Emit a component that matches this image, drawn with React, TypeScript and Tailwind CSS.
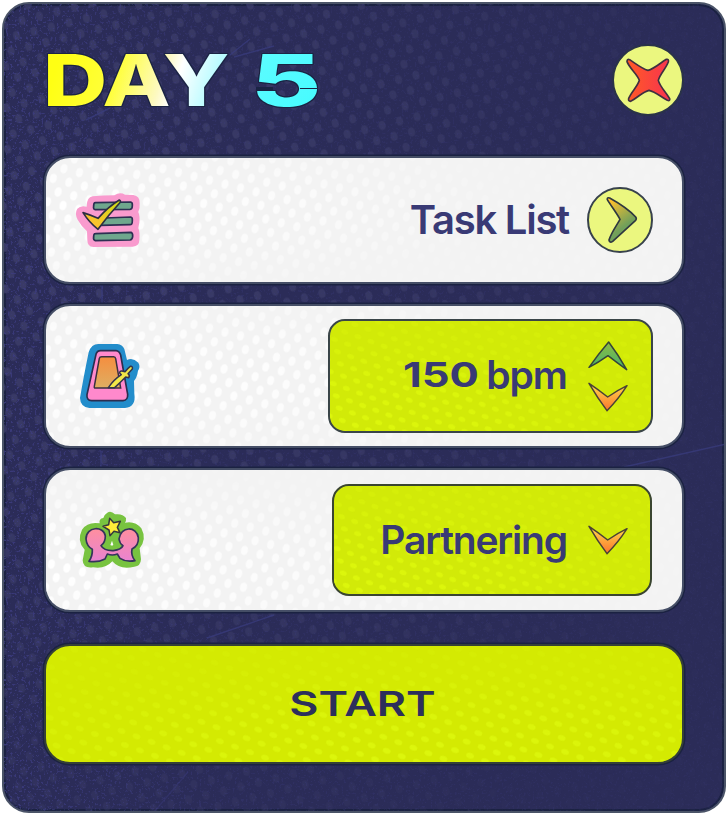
import { useId, type ReactNode } from "react";

type DotsProps = {
  color: string;
  step?: number;
  radius?: number;
  angle?: number;
  from: [number, number];
  spread?: number;
  base?: number;
  flat?: boolean;
};

function Dots({ color, step = 12, radius = 3, angle = 12, from, spread = 0.8, base = 0.1, flat = false }: DotsProps) {
  const id = useId();
  return (
    <svg className="pointer-events-none absolute inset-0 h-full w-full" aria-hidden="true">
      <defs>
        <pattern id={id + "p"} width={step} height={step * 1.5} patternUnits="userSpaceOnUse" patternTransform={`rotate(${angle})`}>
          <ellipse cx={step / 4} cy={step * 0.375} rx={flat ? radius : radius * 0.75} ry={flat ? radius * 0.7 : radius} fill={color} />
          <ellipse cx={step * 0.75} cy={step * 1.125} rx={flat ? radius : radius * 0.75} ry={flat ? radius * 0.7 : radius} fill={color} />
        </pattern>
        <radialGradient id={id + "g"} cx={from[0]} cy={from[1]} r={spread}>
          <stop offset="0" stopColor="#fff" />
          <stop offset="0.5" stopColor="#fff" stopOpacity={(1 + base) / 1.6} />
          <stop offset="1" stopColor="#fff" stopOpacity={base} />
        </radialGradient>
        <mask id={id + "m"}>
          <rect width="100%" height="100%" fill={`url(#${id}g)`} />
        </mask>
      </defs>
      <rect width="100%" height="100%" fill={`url(#${id}p)`} mask={`url(#${id}m)`} />
    </svg>
  );
}

function Speckle() {
  return (
    <svg className="pointer-events-none absolute inset-0 h-full w-full" aria-hidden="true">
      <defs>
        <filter id="speckle" x="0" y="0" width="100%" height="100%" colorInterpolationFilters="sRGB">
          <feTurbulence type="fractalNoise" baseFrequency="0.45" numOctaves="2" seed="4" />
          <feColorMatrix values="0 0 0 0 0.24  0 0 0 0 0.24  0 0 0 0 0.5  0 0 0 8 -4.6" />
        </filter>
        <linearGradient id="speckleFade">
          <stop offset="0" stopColor="#fff" stopOpacity="0.85" />
          <stop offset="0.3" stopColor="#fff" stopOpacity="0.3" />
          <stop offset="1" stopColor="#fff" stopOpacity="0.15" />
        </linearGradient>
        <mask id="speckleMask">
          <rect width="100%" height="100%" fill="url(#speckleFade)" />
        </mask>
      </defs>
      <g mask="url(#speckleMask)">
        <rect width="100%" height="100%" filter="url(#speckle)" />
      </g>
      <g fill="none" stroke="#3b3d80" strokeOpacity=".7" strokeWidth="1.4">
        <path d="M203 634 L270 611" />
        <path d="M620 463 L722 440" />
        <path d="M82 116 L106 104 M230 53 L270 42 M226 51 L246 35" />
        <path d="M98 280 V302 M97 448 V466" />
        <path d="M150 808 L184 768" strokeOpacity=".4" />
      </g>
    </svg>
  );
}

function CloseIcon() {
  return (
    <svg width="46" height="46" viewBox="104 110 138 138" aria-hidden="true">
      <defs>
        <linearGradient id="close">
          <stop offset="0" stopColor="#ff5a26" />
          <stop offset="1" stopColor="#f8334f" />
        </linearGradient>
      </defs>
      <path d="M118 118 C135 129 154 145 173 150 C193 145 210 127 228 117 Q236 115 234 125 C226 146 208 162 204 180 C209 200 228 216 238 235 Q240 243 231 240 C212 230 195 214 176 210 C157 214 141 233 121 243 Q113 243 115 234 C123 215 142 198 147 180 C141 161 118 145 110 124 Q110 115 118 118Z" fill="url(#close)" stroke="#3f3040" strokeWidth="5" strokeLinejoin="round" />
    </svg>
  );
}

function ListIcon() {
  return (
    <svg width="100" height="80" viewBox="0 0 300 240" aria-hidden="true">
      <defs>
        <linearGradient id="tick" x1="0" y1="1" x2="1" y2="0">
          <stop offset="0.2" stopColor="#ffc02f" />
          <stop offset="1" stopColor="#c9df13" />
        </linearGradient>
      </defs>
      <path d="M98 49 Q130 46 163 46 Q180 35 195 44 L220 45 Q240 48 239 70 Q240 86 235 96 Q240 108 238 128 Q236 137 235 145 Q240 155 238 180 Q238 198 218 200 L100 201 Q82 200 82 180 L81 154 Q65 140 53 119 Q43 100 52 86 Q62 75 80 80 Q80 51 98 49Z" fill="#f99bce" />
      <g fill="#6fa78d" stroke="#2d2f52" strokeWidth="5" strokeLinejoin="round">
        <path d="M106 68 Q155 67 212 66 Q218 67 217 77 Q217 87 210 88 L106 89 Q99 88 101 78 Q101 68 106 68Z" />
        <path d="M135 114 L212 111 Q218 112 217 122 Q217 134 210 134 L120 136 Z" />
        <path d="M106 161 L213 157 Q219 160 218 170 Q217 179 210 180 L106 182 Q99 180 101 170 Q101 161 106 161Z" />
      </g>
      <path d="M69 98 Q92 105 114 115 Q145 80 178 60 Q184 62 179 69 Q145 105 114 148 Q88 128 69 98Z" fill="url(#tick)" stroke="#2d2f42" strokeWidth="5" strokeLinejoin="round" />
    </svg>
  );
}

function MetronomeIcon() {
  return (
    <svg className="mb-[2px]" width="100" height="90" viewBox="0 0 300 270" aria-hidden="true">
      <defs>
        <linearGradient id="face" x1="0" y1="0" x2="0" y2="1">
          <stop offset="0" stopColor="#f58e3f" />
          <stop offset="1" stopColor="#dfae62" />
        </linearGradient>
      </defs>
      <path d="M115 42 H172 Q187 43 193 57 L201 90 Q219 82 235 98 Q242 110 234 122 L232 133 Q230 143 222 153 L223 191 Q229 230 195 234 H88 Q61 231 60 204 Q70 145 86 67 Q94 42 115 42Z" fill="#238dcb" />
      <path d="M122 62 H168 Q178 63 182 75 L203 193 Q204 211 189 212 H95 Q79 211 81 194 L108 73 Q111 62 122 62Z" fill="#ff89cc" stroke="#2c2d4f" strokeWidth="5" />
      <path d="M125 80 H161 Q166 80 167 86 L182 174 H104 Q102 173 103 169 L118 85 Q119 80 125 80Z" fill="url(#face)" stroke="#3a3040" strokeWidth="4.5" />
      <path d="M145 173 Q160 150 184 134 L179 129 Q179 122 186 123 L195 125 Q202 116 211 109 Q219 108 217 117 L204 131 Q211 137 206 143 L197 141 Q180 158 164 173Z" fill="#f2e748" stroke="#34344b" strokeWidth="4.5" strokeLinejoin="round" />
    </svg>
  );
}

function PartnersIcon() {
  return (
    <svg width="100" height="80" viewBox="0 0 300 240" aria-hidden="true">
      <defs>
        <linearGradient id="people" x1="0" y1="0" x2="0" y2="1">
          <stop offset="0" stopColor="#ff8f9e" />
          <stop offset="1" stopColor="#e883d2" />
        </linearGradient>
      </defs>
      <path fillRule="evenodd" d="M142 38 Q153 31 165 43 Q188 40 198 54 Q199 63 195 68 Q226 62 244 85 Q261 117 239 145 L243 178 Q242 199 223 200 Q180 211 157 184 Q136 208 99 202 Q69 206 68 181 L74 149 Q49 123 66 89 Q83 64 119 70 Q116 56 130 54 Q133 43 142 38Z M156 122 L151 135 Q156 138 160 135Z" fill="#78c340" />
      <path d="M136 108 C132 77 78 78 78 117 Q80 139 97 148 Q98 169 87 184 Q115 188 135 177 L142 162 Q157 168 172 162 L180 175 Q198 187 225 182 Q212 166 216 147 Q237 137 235 113 C231 78 181 77 177 117 Q179 131 189 137 Q184 149 160 152 Q132 153 123 137 Q136 128 136 108Z" fill="url(#people)" stroke="#34345b" strokeWidth="5" strokeLinejoin="round" />
      <path d="M149 55 L161 68 L181 64 L172 82 L180 98 L162 94 L150 107 L147 90 L129 79 L146 74Z" fill="#ffed39" stroke="#36363c" strokeWidth="4.5" strokeLinejoin="round" />
    </svg>
  );
}

function ChevronRight() {
  return (
    <svg width="32" height="48" viewBox="650 78 96 144" aria-hidden="true">
      <defs>
        <linearGradient id="next" x1="0" y1="0" x2="0.5" y2="1">
          <stop offset="0.1" stopColor="#ffc02c" />
          <stop offset="0.75" stopColor="#71a05a" />
        </linearGradient>
      </defs>
      <path d="M661 84 C688 99 721 121 739 141 Q743 147 738 152 L670 214 Q661 220 659 210 C666 188 681 168 692 148 C681 128 666 109 654 89 Q653 81 661 84Z" fill="url(#next)" stroke="#2f3840" strokeWidth="5" strokeLinejoin="round" />
    </svg>
  );
}

function ChevronUp() {
  return (
    <svg width="40" height="30" viewBox="834 122 120 90" aria-hidden="true">
      <defs>
        <linearGradient id="up" x1="0" y1="0" x2="0" y2="1">
          <stop offset="0" stopColor="#8fbb42" />
          <stop offset="1" stopColor="#43b36d" />
        </linearGradient>
      </defs>
      <path d="M896 125 Q924 162 950 208 Q922 188 894 166 Q866 186 837 201 Q866 160 896 125Z" fill="url(#up)" stroke="#35443c" strokeWidth="4.5" strokeLinejoin="round" />
    </svg>
  );
}

function ChevronDown({ id }: { id: string }) {
  return (
    <svg width="40" height="30" viewBox="834 244 120 90" aria-hidden="true">
      <defs>
        <linearGradient id={id} x1="0" y1="0" x2="0" y2="1">
          <stop offset="0.1" stopColor="#ffd34a" />
          <stop offset="0.9" stopColor="#fb7d31" />
        </linearGradient>
      </defs>
      <path d="M837 248 Q864 266 893 289 Q924 268 951 255 Q925 296 891 330 Q862 291 837 248Z" fill={`url(#${id})`} stroke="#4a4236" strokeWidth="4.5" strokeLinejoin="round" />
    </svg>
  );
}

function Card({ className, children, dots }: { className: string; children: ReactNode; dots: [number, number] }) {
  return (
    <section className={`relative overflow-hidden rounded-[26px] border-2 border-[#454e66] bg-[#f3f3f3] shadow-[0_0_0_1.5px_#1b2242] ${className}`}>
      <Dots color="#ffffff" from={dots} step={16} radius={4.8} angle={14} spread={0.75} />
      <div className="relative flex h-full items-center justify-between pl-[14px] pr-[29px]">{children}</div>
    </section>
  );
}

export default function App() {
  return (
    <div className="h-[814px] w-[726px] overflow-hidden bg-white pl-[2px] pt-[2px] font-['Inter',sans-serif] text-[#393a75]">
      <main className="relative flex h-[811px] w-[724px] flex-col overflow-hidden rounded-[27px] border-2 border-[#4b5468] bg-[#2b2c58] px-[40px] pt-[39px] shadow-[inset_0_0_0_2px_#1b2242]">
        <Dots color="#3b3c68" from={[0.1, 0.3]} step={18} radius={4.6} angle={-14} spread={0.9} base={0.12} />
        <Speckle />
        <header className="relative flex h-[74px] items-center justify-between">
          <h1 className="-ml-px flex h-[74px] w-[280px] text-[72px] font-extrabold leading-[74px] [filter:drop-shadow(1px_0_0_#1b2444)_drop-shadow(-1px_0_0_#1b2444)_drop-shadow(0_1px_0_#1b2444)_drop-shadow(0_-1px_0_#1b2444)]">
            <span className="w-[208px]">
              <span className="inline-block origin-left scale-x-[1.235] bg-[linear-gradient(105deg,#ffff14_10%,#ffff3c_40%,#fdf9c0_62%,#ffffff_70%,#b8fbff_88%)] bg-clip-text tracking-[-0.01em] text-transparent">DAY</span>
            </span>
            <span className="relative">
              <span className="inline-block origin-left scale-x-[1.5] bg-linear-to-br from-[#5ffcff] to-[#42fbff] bg-clip-text text-transparent">5</span>
              <i className="absolute left-[6px] top-[45px] h-px w-[15px] bg-[#1b2444]" />
              <i className="absolute left-[49px] top-[45px] h-px w-[17px] bg-[#1b2444]" />
            </span>
          </h1>
          <button className="flex size-[72px] items-center justify-center rounded-full border-2 border-[#2a3348] bg-[#ebf77f]" aria-label="Close">
            <CloseIcon />
          </button>
        </header>

        <div className="relative mt-[39px] flex flex-col">
          <Card className="h-[128px]" dots={[0, 0.4]}>
            <ListIcon />
            <div className="flex items-center gap-[18px]">
              <span className="text-[40px] font-semibold leading-none tracking-[-0.031em]">Task List</span>
              <button className="flex size-[66px] items-center justify-center rounded-full border-2 border-[#38424c] bg-[#ebf77f] pl-1" aria-label="Open task list">
                <ChevronRight />
              </button>
            </div>
          </Card>

          <Card className="mt-[20px] h-[144px]" dots={[0.1, 0.5]}>
            <MetronomeIcon />
            <div className="relative flex h-[114px] w-[325px] items-center justify-end overflow-hidden rounded-[17px] border-2 border-[#3a4548] bg-[#d2ea08] pr-[23px]">
              <Dots color="#dcf60c" from={[0.1, 0.9]} step={14} radius={3.6} angle={20} base={0.4} flat />
              <span className="relative flex w-[164px] items-baseline pb-[4px]">
                <span className="w-[84px] text-[34px] font-bold leading-none">
                  <span className="inline-block origin-left -translate-y-[2px] scale-x-[1.28]">150</span>
                </span>
                <span className="text-[39px] font-semibold leading-none tracking-[-0.025em]">bpm</span>
              </span>
              <span className="relative ml-[21px] flex flex-col gap-[11px]">
                <ChevronUp />
                <ChevronDown id="tempoDown" />
              </span>
            </div>
          </Card>

          <Card className="mt-[20px] h-[144px]" dots={[0, 0.7]}>
            <PartnersIcon />
            <div className="relative mr-px flex h-[112px] w-[320px] items-center justify-end overflow-hidden rounded-[17px] border-2 border-[#3a4530] bg-[#d2ea08] pr-[22px]">
              <Dots color="#dcf60c" from={[0.1, 0.9]} step={14} radius={3.6} angle={20} base={0.4} flat />
              <span className="relative pb-[2px] text-[39px] font-semibold leading-none tracking-[-0.03em]">Partnering</span>
              <span className="relative ml-[21px]">
                <ChevronDown id="modeDown" />
              </span>
            </div>
          </Card>

          <button className="relative mt-[32px] flex h-[120px] items-center justify-center overflow-hidden rounded-[26px] border-2 border-[#354038] bg-[#d4ea02] shadow-[0_0_0_1.5px_#1b2242]">
            <Dots color="#dcf60c" from={[0.6, 0.9]} step={16} radius={4} angle={20} base={0.25} flat />
            <span className="relative inline-block -translate-x-[2px] scale-x-[1.32] text-[34px] font-semibold leading-none text-[#2d2f5b]">START</span>
          </button>
        </div>
      </main>
    </div>
  );
}
